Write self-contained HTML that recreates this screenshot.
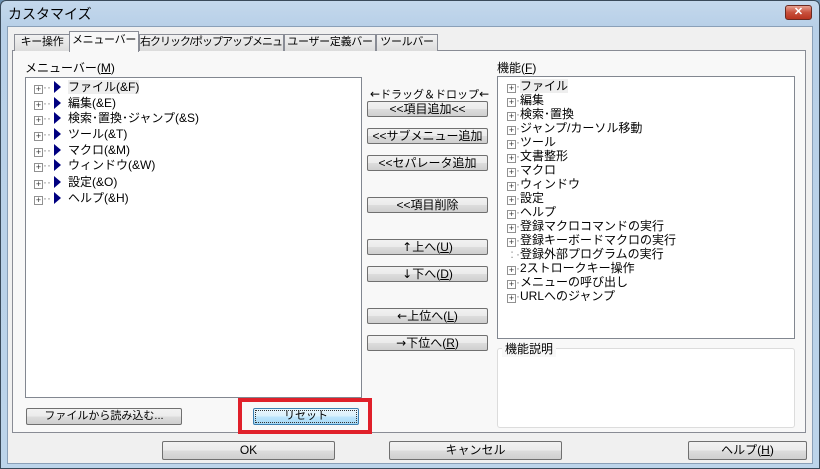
<!DOCTYPE html>
<html><head><meta charset="utf-8"><style>
*{box-sizing:border-box;margin:0;padding:0}
body{width:820px;height:469px;overflow:hidden;background:#6b8fb0;font-family:"Liberation Sans","Noto Sans CJK JP",sans-serif;font-size:12px;color:#000;position:relative}
.frame{position:absolute;left:0;top:0;width:820px;height:469px;background:linear-gradient(#c4d8ec,#b8d0e8 25px,#bcd4ea);border:1px solid #3a4a5a;border-radius:6px 6px 0 0}
.title{position:absolute;left:8px;top:4px;font-size:14px;color:#000}
.close{position:absolute;left:785px;top:5px;width:27px;height:15px;border:1px solid #6a2a22;border-radius:3px;background:linear-gradient(#e8a090,#c8503c 50%,#b83420);color:#fff;font-size:11px;font-weight:bold;text-align:center;line-height:13px}
.client{position:absolute;left:7px;top:26px;width:806px;height:438px;background:#f0f0f0;border:1px solid #8aa0b8}
.a{position:absolute}
.tab{position:absolute;top:34px;height:17px;border:1px solid #898c95;border-bottom:none;background:linear-gradient(#f2f2f2,#dcdcdc);font-size:11px;line-height:15px;text-align:center;white-space:nowrap;overflow:hidden;letter-spacing:-0.3px}
.panel{position:absolute;left:12px;top:50px;width:794px;height:383px;border:1px solid #898c95;background:#f8f8f8}
.box{position:absolute;background:#fff;border:1px solid #828790}
.btn{position:absolute;height:16px;border:1px solid #707070;border-radius:2px;background:linear-gradient(#f2f2f2,#ebebeb 50%,#dddddd 50%,#cfcfcf);text-align:center;font-size:12px;line-height:14px;white-space:nowrap}
.row{position:absolute;height:14px;line-height:14px;white-space:nowrap}
.pl{display:inline-block;width:9px;height:9px;border:1px solid #919191;background:#fff;position:relative;vertical-align:-1px;font-size:9px;line-height:7px;text-align:center;color:#333}
.tri{display:inline-block;width:0;height:0;border-top:6px solid transparent;border-bottom:6px solid transparent;border-left:7px solid #000080;vertical-align:-2px}
u{text-decoration:underline}
.ar{font-family:"DejaVu Sans",sans-serif;font-size:12px}
</style></head><body>
<div class="frame"></div>
<div class="title">カスタマイズ</div>
<div class="close">✕</div>
<div class="client"></div>
<div class="panel"></div>
<div class="tab" style="left:14px;width:56px">キー操作</div>
<div class="tab" style="left:139px;width:145px;letter-spacing:-1px">右クリック/ポップアップメニュー</div>
<div class="tab" style="left:284px;width:92px">ユーザー定義バー</div>
<div class="tab" style="left:376px;width:62px">ツールバー</div>
<div class="tab" style="left:69px;width:70px;top:31px;height:21px;background:#f8f8f8;z-index:2;line-height:17px">メニューバー</div>

<div class="a" style="left:25px;top:59px">メニューバー(<u>M</u>)</div>
<div class="box" style="left:25px;top:77px;width:337px;height:321px"></div>
<div class="a" style="left:34px;top:80px;font-size:12px">
<div class="row" style="top:0"><span class="pl">+</span><span style="color:#888">··</span> <span class="tri"></span>&nbsp; <span style="background:#eee">ファイル(&amp;F)</span></div>
<div class="row" style="top:16px"><span class="pl">+</span><span style="color:#888">··</span> <span class="tri"></span>&nbsp; 編集(&amp;E)</div>
<div class="row" style="top:31px"><span class="pl">+</span><span style="color:#888">··</span> <span class="tri"></span>&nbsp; 検索･置換･ジャンプ(&amp;S)</div>
<div class="row" style="top:47px"><span class="pl">+</span><span style="color:#888">··</span> <span class="tri"></span>&nbsp; ツール(&amp;T)</div>
<div class="row" style="top:63px"><span class="pl">+</span><span style="color:#888">··</span> <span class="tri"></span>&nbsp; マクロ(&amp;M)</div>
<div class="row" style="top:78px"><span class="pl">+</span><span style="color:#888">··</span> <span class="tri"></span>&nbsp; ウィンドウ(&amp;W)</div>
<div class="row" style="top:95px"><span class="pl">+</span><span style="color:#888">··</span> <span class="tri"></span>&nbsp; 設定(&amp;O)</div>
<div class="row" style="top:111px"><span class="pl">+</span><span style="color:#888">··</span> <span class="tri"></span>&nbsp; ヘルプ(&amp;H)</div>
</div>

<div class="a" style="left:370px;top:86px;font-size:11px"><span class="ar">←</span>ドラッグ＆ドロップ<span class="ar">←</span></div>
<div class="btn" style="left:367px;top:101px;width:121px">&lt;&lt;項目追加&lt;&lt;</div>
<div class="btn" style="left:367px;top:128px;width:121px">&lt;&lt;サブメニュー追加</div>
<div class="btn" style="left:367px;top:155px;width:121px">&lt;&lt;セパレータ追加</div>
<div class="btn" style="left:367px;top:197px;width:121px">&lt;&lt;項目削除</div>
<div class="btn" style="left:367px;top:239px;width:121px"><span class="ar">↑</span>上へ(<u>U</u>)</div>
<div class="btn" style="left:367px;top:266px;width:121px"><span class="ar">↓</span>下へ(<u>D</u>)</div>
<div class="btn" style="left:367px;top:308px;width:121px"><span class="ar">←</span>上位へ(<u>L</u>)</div>
<div class="btn" style="left:367px;top:335px;width:121px"><span class="ar">→</span>下位へ(<u>R</u>)</div>

<div class="a" style="left:497px;top:59px">機能(<u>F</u>)</div>
<div class="box" style="left:497px;top:76px;width:298px;height:263px"></div>
<div class="a" style="left:507px;top:79px">
<div class="row" style="top:0"><span class="pl">+</span><span style="color:#888">·</span><span style="background:#eee">ファイル</span></div>
<div class="row" style="top:14px"><span class="pl">+</span><span style="color:#888">·</span>編集</div>
<div class="row" style="top:28px"><span class="pl">+</span><span style="color:#888">·</span>検索･置換</div>
<div class="row" style="top:42px"><span class="pl">+</span><span style="color:#888">·</span>ジャンプ/カーソル移動</div>
<div class="row" style="top:56px"><span class="pl">+</span><span style="color:#888">·</span>ツール</div>
<div class="row" style="top:70px"><span class="pl">+</span><span style="color:#888">·</span>文書整形</div>
<div class="row" style="top:84px"><span class="pl">+</span><span style="color:#888">·</span>マクロ</div>
<div class="row" style="top:98px"><span class="pl">+</span><span style="color:#888">·</span>ウィンドウ</div>
<div class="row" style="top:112px"><span class="pl">+</span><span style="color:#888">·</span>設定</div>
<div class="row" style="top:126px"><span class="pl">+</span><span style="color:#888">·</span>ヘルプ</div>
<div class="row" style="top:140px"><span class="pl">+</span><span style="color:#888">·</span>登録マクロコマンドの実行</div>
<div class="row" style="top:154px"><span class="pl">+</span><span style="color:#888">·</span>登録キーボードマクロの実行</div>
<div class="row" style="top:168px"><span style="display:inline-block;width:9px;color:#888">&nbsp;:</span><span style="color:#888">·</span>登録外部プログラムの実行</div>
<div class="row" style="top:182px"><span class="pl">+</span><span style="color:#888">·</span>2ストロークキー操作</div>
<div class="row" style="top:196px"><span class="pl">+</span><span style="color:#888">·</span>メニューの呼び出し</div>
<div class="row" style="top:210px"><span class="pl">+</span><span style="color:#888">·</span>URLへのジャンプ</div>
</div>
<div class="a" style="left:497px;top:348px;width:298px;height:80px;border:1px solid #dcdcdc;border-radius:3px;background:#fff"></div>
<div class="a" style="left:502px;top:340px;background:#f8f8f8;padding:0 3px">機能説明</div>

<div class="btn" style="left:26px;top:408px;width:156px;height:17px;font-size:11px">ファイルから読み込む...</div>
<div class="a" style="left:238px;top:398px;width:134px;height:36px;border:4px solid #e0202a"></div>
<div class="btn" style="left:253px;top:408px;width:106px;height:17px;border-color:#3c7fb1;background:linear-gradient(#eaf6fd,#d9f0fc 50%,#bee6fd 50%,#a7d9f5);font-size:11px"><span style="display:block;margin:1px;border:1px dotted #333;height:13px;line-height:11px">リセット</span></div>

<div class="btn" style="left:162px;top:441px;width:173px;height:19px;line-height:17px">OK</div>
<div class="btn" style="left:389px;top:441px;width:173px;height:19px;line-height:17px">キャンセル</div>
<div class="btn" style="left:688px;top:441px;width:119px;height:19px;line-height:17px">ヘルプ(<u>H</u>)</div>
</body></html>
